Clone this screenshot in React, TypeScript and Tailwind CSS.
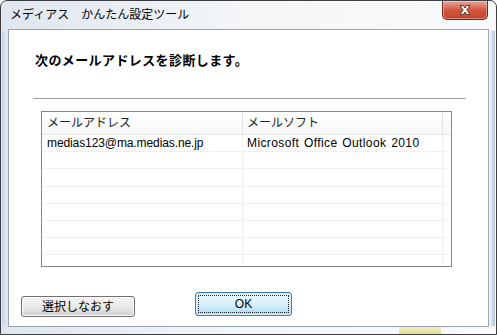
import React from 'react'

const jp = { fontFamily: '"Liberation Sans", "Noto Sans CJK JP", sans-serif' }

function CloseButton() {
  return (
    <div className="absolute right-[8px] top-0 flex h-[19px] w-[46px] items-center justify-center rounded-b-[5px] border border-t-0 border-[#6b2a1f] bg-gradient-to-b from-[#e9a89b] via-[#d1553d] to-[#c4462c] shadow-[inset_0_0_0_1px_rgba(255,255,255,0.35)]">
      <svg width="16" height="12" viewBox="0 0 16 12">
        <path
          d="M3 1.5 L6.2 1.5 L8 4 L9.8 1.5 L13 1.5 L9.8 6 L13 10.5 L9.8 10.5 L8 8 L6.2 10.5 L3 10.5 L6.2 6 Z"
          fill="#ffffff"
          stroke="#5a3a36"
          strokeWidth="1"
          strokeLinejoin="round"
        />
      </svg>
    </div>
  )
}

function MailList() {
  const rows = [
    ['medias123@ma.medias.ne.jp', 'Microsoft Office Outlook 2010'],
    ['', ''],
    ['', ''],
    ['', ''],
    ['', ''],
    ['', ''],
    ['', ''],
    ['', ''],
  ]
  return (
    <div className="ml-[32px] mt-[12px] h-[156px] w-[411px] overflow-hidden border border-[#828790] bg-white">
      {/* header */}
      <div className="flex h-[23px] border-b border-[#e3e3e3] bg-gradient-to-b from-white to-[#f6f7f8] text-[12px] text-[#222]">
        <div className="flex w-[201px] items-center border-r border-[#e1e1e1] pl-[5px]">メールアドレス</div>
        <div className="flex w-[200px] items-center border-r border-[#e1e1e1] pl-[4px]">メールソフト</div>
        <div className="flex-1" />
      </div>
      {rows.map((r, i) => (
        <div key={i} className="flex h-[17.2px] border-b border-[#f0f0f0] text-[12px] text-black">
          <div className="flex w-[201px] items-center border-r border-[#f0f0f0] pl-[5px] tracking-[-0.1px]">{r[0]}</div>
          <div className="flex w-[200px] items-center border-r border-[#f0f0f0] pl-[4px] tracking-[0.4px] [word-spacing:1px]">{r[1]}</div>
          <div className="flex-1" />
        </div>
      ))}
    </div>
  )
}

export default function App() {
  return (
    <div style={jp} className="relative h-[335px] w-[497px] overflow-hidden bg-white">
      <div className="relative flex h-[335px] w-[497px] flex-col rounded-t-[7px] border border-[#3b3f45] bg-gradient-to-r from-[#dfe6ee] via-[#f4f6f8] to-[#f9fafb] px-[7px] pb-[7px]">
        {/* left/right glass tint */}
        <div className="pointer-events-none absolute bottom-[8px] left-[1px] top-[30px] w-[5px] bg-gradient-to-r from-[#c9d3e2] to-[#e4e9f0]" />
        <div className="pointer-events-none absolute bottom-[8px] right-[1px] top-[30px] w-[5px] bg-gradient-to-r from-[#e7ecf3] to-[#b9c6de]" />
        <div className="pointer-events-none absolute bottom-0 right-[55px] h-[7px] w-[42px] bg-gradient-to-b from-[#f1eab0] to-[#e2d27a] opacity-80" />

        {/* title bar */}
        <div className="flex h-[28px] items-center pl-[2px] text-[12px] text-black">
          メディアス　かんたん設定ツール
        </div>
        <CloseButton />

        {/* client */}
        <div className="relative flex flex-1 flex-col border border-[#9aa4b0] bg-white">
          <div className="ml-[26px] mt-[22px] text-[13px] font-bold leading-[18px] tracking-[0.4px] text-black">
            次のメールアドレスを診断します。
          </div>
          <div className="ml-[24px] mt-[28px] h-px w-[433px] bg-[#a0a0a0]" />
          <MailList />
          <div className="mt-[25px] flex items-end">
            <button className="ml-[12px] h-[21px] w-[114px] rounded-[3px] border border-[#707070] bg-gradient-to-b from-[#f2f2f2] via-[#ebebeb] to-[#cfcfcf] text-[12px] text-black shadow-[inset_0_0_0_1px_#fcfcfc]">
              選択しなおす
            </button>
            <button className="relative ml-[60px] mb-[1px] h-[24px] w-[97px] rounded-[3px] border border-[#3c7fb1] bg-gradient-to-b from-[#eaf6fd] via-[#d9f0fc] to-[#a7d9f5] text-[12px] text-black shadow-[inset_0_0_0_1px_#cfeefd]">
              <span className="absolute inset-[2px] border border-dotted border-[#222]" />
              OK
            </button>
          </div>
        </div>
      </div>
    </div>
  )
}
